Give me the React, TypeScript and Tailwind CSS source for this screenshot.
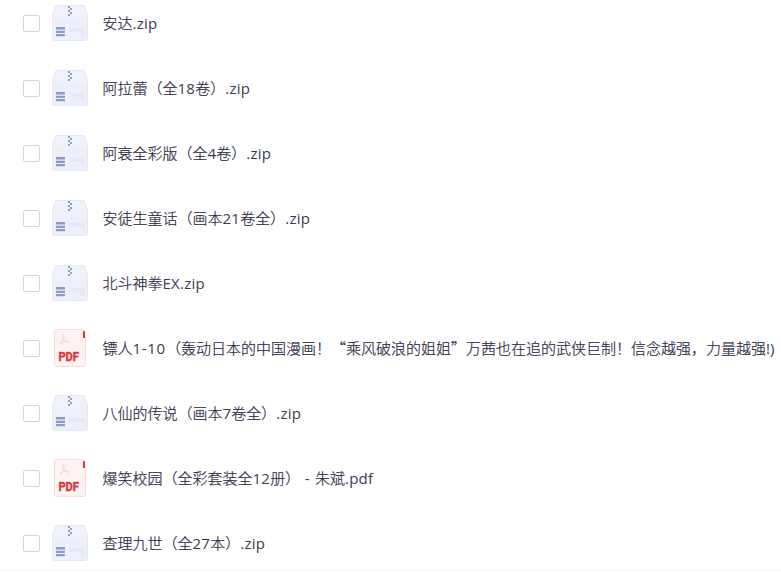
import { useState } from "react";

interface FileItem {
  name: string;
  type: "zip" | "pdf";
}

const files: FileItem[] = [
  { name: "安达.zip", type: "zip" },
  { name: "阿拉蕾（全18卷）.zip", type: "zip" },
  { name: "阿衰全彩版（全4卷）.zip", type: "zip" },
  { name: "安徒生童话（画本21卷全）.zip", type: "zip" },
  { name: "北斗神拳EX.zip", type: "zip" },
  { name: "镖人1-10（轰动日本的中国漫画！“乘风破浪的姐姐”万茜也在追的武侠巨制！信念越强，力量越强!)", type: "pdf" },
  { name: "八仙的传说（画本7卷全）.zip", type: "zip" },
  { name: "爆笑校园（全彩套装全12册） - 朱斌.pdf", type: "pdf" },
  { name: "查理九世（全27本）.zip", type: "zip" },
];

function ZipIcon() {
  return (
    <svg width="36" height="36" viewBox="0 0 36 36" className="block">
      <path d="M3.9.5h28.2L35.5 10v23.5a2 2 0 0 1-2 2h-31a2 2 0 0 1-2-2V10z" fill="#f0f2fb" stroke="#e4e7f5" />
      <path d="M1 14h34v19.5a1.5 1.5 0 0 1-1.5 1.5h-31A1.5 1.5 0 0 1 1 33.5z" fill="#ebeefa" opacity=".6" />
      <path d="M16 1h2v2h-2zM18 3h2v2h-2zM16 5h2v2h-2zM18 7h2v2h-2zM16 9h2v2h-2z" fill="#8f9dc0" />
      <path d="M4 22h9v2.6H4zM4 25.700h9v2.300H4zM4 29h9v2.200H4z" fill="#8d9cc1" />
      <text x="17" y="27" fontSize="4.500" fill="#dce0ee" textLength="16" lengthAdjust="spacingAndGlyphs" className="font-['Liberation_Sans']">ZIP/RAR/</text>
      <text x="28" y="31.300" fontSize="4.500" fill="#dce0ee" className="font-['Liberation_Sans']">7Z</text>
    </svg>
  );
}

function PdfIcon() {
  return (
    <svg width="32" height="38" viewBox="0 0 32 38" className="block">
      <path d="M2 .5h27l2.500 8V36a1.500 1.500 0 0 1-1.500 1.500H2A1.500 1.500 0 0 1 .5 36V2A1.500 1.500 0 0 1 2 .5z" fill="#fef3f3" stroke="#fbd9da" />
      <path d="M29 2h1.200l.8.800V9h-2z" fill="#e0333a" />
      <path
        d="M9.600 5.500c-.8 0-.8 1.400-.4 2.800.8 2.400 2.900 4.700 4.900 5.100 1.200.1 1-.9-.3-1.200-2.600-.5-5.800.9-7.600 2.100-.9.7-.2 1.200.6.400 1.800-1.900 3.200-4.900 3.300-7.700 0-.9-.1-1.500-.5-1.500z"
        fill="none"
        stroke="#fbcfd0"
        strokeWidth="1"
      />
      <text x="4.400" y="32" fontSize="13" fill="#e0333a" stroke="#e0333a" strokeWidth=".4" textLength="20.600" lengthAdjust="spacingAndGlyphs" className="font-['Roboto'] font-bold">PDF</text>
    </svg>
  );
}

// Latin runs are set slightly looser than the CJK text around them
function FileName({ name }: { name: string }) {
  return (
    <span className="ml-[14.5px] mb-[2px] whitespace-nowrap text-[15px] leading-5 font-light text-[#2a2b42] [-webkit-text-stroke:0.2px_#2a2b42] font-['Noto_Sans_CJK_SC',sans-serif]">
      {name.split(/([\x20-\x7e]+)/).map((part, i) =>
        i % 2 === 1 ? (
          <span
            key={i}
            className={
              part.includes("-")
                ? "font-normal tracking-[0.7px] text-[#3a3b4f] [-webkit-text-stroke:0] font-['Open_Sans',sans-serif]"
                : "font-normal tracking-[0.25px] text-[#3a3b4f] [-webkit-text-stroke:0] font-['Open_Sans',sans-serif]"
            }
          >
            {part}
          </span>
        ) : (
          part
        )
      )}
    </span>
  );
}

export default function App() {
  const [selected, setSelected] = useState<string[]>([]);

  const toggle = (name: string) => {
    setSelected(selected.includes(name) ? selected.filter((n) => n !== name) : [...selected, name]);
  };

  return (
    <div className="h-[573px] w-full overflow-hidden bg-white">
      <div lang="zh-CN" className="h-[571px] overflow-hidden border-b border-[#f1f2f4]">
        <ul className="-mt-[9px]">
          {files.map((file) => (
            <li key={file.name} className="flex h-[65px] items-center pl-[23px]">
              <input
                type="checkbox"
                checked={selected.includes(file.name)}
                onChange={() => toggle(file.name)}
                className="size-[17px] shrink-0 appearance-none rounded-[2px] border border-[#d4d5d9] bg-white checked:border-blue-500 checked:bg-blue-500"
              />
              <div className="ml-3 flex h-[39px] w-9 shrink-0 justify-center">
                {file.type === "zip" ? (
                  <div className="pt-px">
                    <ZipIcon />
                  </div>
                ) : (
                  <PdfIcon />
                )}
              </div>
              <FileName name={file.name} />
            </li>
          ))}
        </ul>
      </div>
    </div>
  );
}
